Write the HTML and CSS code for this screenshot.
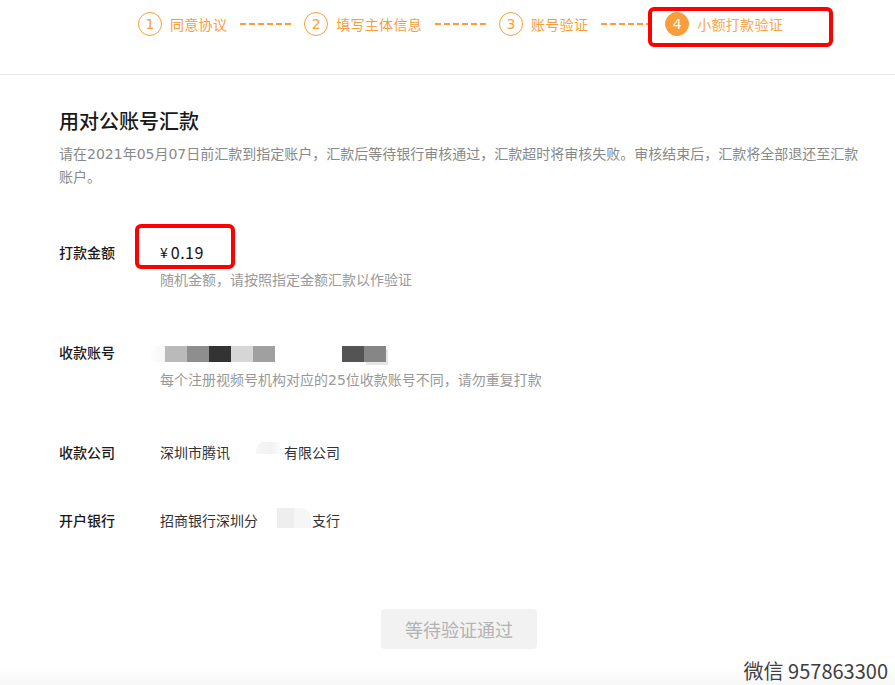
FILE: index.html
```html
<!DOCTYPE html>
<html lang="zh-CN">
<head>
<meta charset="utf-8">
<title>用对公账号汇款</title>
<link rel="stylesheet" href="styles.css">
</head>
<body>
<div class="page">
  <header class="steps">
    <div class="step">
      <span class="num">1</span><span class="step-text">同意协议</span>
    </div>
    <span class="dash"></span>
    <div class="step">
      <span class="num">2</span><span class="step-text">填写主体信息</span>
    </div>
    <span class="dash"></span>
    <div class="step">
      <span class="num">3</span><span class="step-text">账号验证</span>
    </div>
    <span class="dash"></span>
    <div class="step step-current">
      <span class="num">4</span><span class="step-text">小额打款验证</span>
      <span class="mark mark-step"></span>
    </div>
  </header>

  <main class="content">
    <h1 class="title">用对公账号汇款</h1>
    <p class="desc">请在2021年05月07日前汇款到指定账户，汇款后等待银行审核通过，汇款超时将审核失败。审核结束后，汇款将全部退还至汇款账户。</p>

    <div class="row row-first">
      <div class="label">打款金额</div>
      <div class="field">
        <div class="value amount">¥<span class="amount-num">0.19</span><span class="mark mark-amount"></span></div>
        <div class="hint">随机金额，请按照指定金额汇款以作验证</div>
      </div>
    </div>

    <div class="row">
      <div class="label">收款账号</div>
      <div class="field">
        <div class="value">
          <div class="masked">
            <span class="px fade"></span>
            <span class="px c1"></span>
            <span class="px c2"></span>
            <span class="px c3"></span>
            <span class="px c4"></span>
            <span class="px c5"></span>
            <span class="px gap"></span>
            <span class="px c6"></span>
            <span class="px c7"></span>
          </div>
        </div>
        <div class="hint">每个注册视频号机构对应的25位收款账号不同，请勿重复打款</div>
      </div>
    </div>

    <div class="row">
      <div class="label">收款公司</div>
      <div class="field">
        <div class="value">深圳市腾讯<span class="smudge smudge-a"><span class="patch"></span></span>有限公司</div>
      </div>
    </div>

    <div class="row row-last">
      <div class="label">开户银行</div>
      <div class="field">
        <div class="value">招商银行深圳分<span class="smudge smudge-b"><span class="patch"></span></span>支行</div>
      </div>
    </div>

    <div class="actions">
      <button class="btn" disabled>等待验证通过</button>
    </div>
  </main>

  <div class="watermark">微信 957863300</div>
  <div class="bottom-fade"></div>
</div>
</body>
</html>
```

FILE: styles.css
```css
html, body {
  margin: 0;
  padding: 0;
  background: #ffffff;
}

body {
  font-family: "Noto Sans CJK SC", "Noto Sans", sans-serif;
  color: #333333;
  overflow: hidden;
}

.page {
  position: relative;
  width: 895px;
  height: 685px;
  overflow: hidden;
}

/* ---------- steps ---------- */
.steps {
  height: 75px;
  border-bottom: 1px solid #e5e5e5;
  display: flex;
  align-items: flex-start;
  padding: 12px 0 0 138px;
  box-sizing: border-box;
}

.step {
  position: relative;
  display: flex;
  align-items: center;
  height: 24px;
}

.num {
  width: 24px;
  height: 24px;
  box-sizing: border-box;
  border: 1px solid #fa9d3b;
  border-radius: 50%;
  color: #fa9d3b;
  font-family: "DejaVu Sans", "Noto Sans CJK SC", sans-serif;
  font-size: 14px;
  line-height: 22px;
  text-align: center;
}

.step-text {
  margin-left: 8px;
  font-size: 14px;
  line-height: 24px;
  letter-spacing: 0.3px;
  color: #fa9d3b;
}

.step-current .num {
  background: #fa9d3b;
  color: #ffffff;
}

.step-current .step-text {
  color: #f9a648;
}

.dash {
  width: 54px;
  height: 2px;
  margin: 11px 10px 0 13px;
  background: repeating-linear-gradient(90deg, #fa9d3b 0 6px, transparent 6px 9px);
}

.mark {
  position: absolute;
  border: 4px solid #ff0000;
  border-radius: 6px;
  box-sizing: border-box;
  pointer-events: none;
}

.mark-step {
  left: -17px;
  top: -5px;
  width: 185px;
  height: 40px;
}

/* ---------- content ---------- */
.content {
  padding: 32px 36px 0 59px;
}

.title {
  margin: 0;
  font-size: 20px;
  line-height: 28px;
  font-weight: 500;
  color: #191919;
}

.desc {
  margin: 8px 0 0;
  font-family: "DejaVu Sans", "Noto Sans CJK SC", sans-serif;
  font-size: 14px;
  line-height: 23px;
  color: #888888;
}

.row {
  display: flex;
  margin-top: 50px;
}

.row-first {
  margin-top: 52px;
}

.row-last {
  margin-top: 46px;
}

.label {
  width: 101px;
  flex: none;
  font-size: 14px;
  line-height: 22px;
  font-weight: 500;
  color: #191919;
}

.field {
  display: flex;
  flex-direction: column;
  gap: 6px;
}

.value {
  position: relative;
  display: flex;
  align-items: center;
  font-size: 14px;
  line-height: 22px;
  height: 22px;
  color: #333333;
}

.amount {
  color: #111111;
}

.amount-num {
  margin-left: 3px;
  font-size: 16px;
  letter-spacing: 0.5px;
}

.mark-amount {
  left: -25px;
  top: -17px;
  width: 100px;
  height: 45px;
}

.hint {
  font-family: "DejaVu Sans", "Noto Sans CJK SC", sans-serif;
  font-size: 14px;
  line-height: 22px;
  color: #999999;
}

/* masked account */
.masked {
  display: flex;
  margin: 4px 0 0 -12px;
  height: 16px;
}

.px {
  width: 22px;
  height: 16px;
}

.px.fade { width: 17px; background: linear-gradient(90deg, #ffffff, #f6f6f6); border-radius: 8px 0 0 8px; }
.px.c1 { background: #bababa; }
.px.c2 { background: #8e8e8e; }
.px.c3 { background: #333333; }
.px.c4 { background: #d6d6d6; }
.px.c5 { background: #a0a0a0; }
.px.gap { width: 67px; }
.px.c6 { background: #545454; }
.px.c7 { background: #868686; box-shadow: 2px 3px 0 #e6e6e6; }

/* smudged text */
.smudge {
  display: inline-flex;
  align-items: center;
  width: 54px;
  height: 22px;
}

.smudge .patch {
  display: block;
  height: 18px;
  background: linear-gradient(90deg, #f7f7f7, #f1f1f1 60%, #fbfbfb);
}

.smudge-a .patch {
  margin-left: 26px;
  width: 24px;
  height: 12px;
  margin-top: -8px;
  border-radius: 8px 0 0 0;
}

.smudge-b .patch {
  margin-left: 19px;
  width: 34px;
  height: 20px;
  margin-top: -4px;
  background: linear-gradient(90deg, #eeeeee 0 50%, #f6f6f6 50%);
  border-radius: 0 10px 0 0;
}

/* ---------- button ---------- */
.actions {
  display: flex;
  justify-content: center;
  margin-top: 78px;
}

.btn {
  width: 156px;
  height: 40px;
  border: none;
  border-radius: 4px;
  background: #f2f2f2;
  color: #b2b2b2;
  font-family: "Noto Sans CJK SC", sans-serif;
  font-size: 18px;
  line-height: 40px;
  padding: 0;
}

/* ---------- overlay ---------- */
.watermark {
  position: absolute;
  right: 7px;
  top: 657px;
  font-size: 20px;
  line-height: 28px;
  color: #3f3f3f;
  z-index: 2;
}

.bottom-fade {
  position: absolute;
  left: 0;
  right: 0;
  bottom: 0;
  height: 18px;
  background: linear-gradient(180deg, rgba(0,0,0,0), rgba(0,0,0,0.03));
  z-index: 1;
}
```
